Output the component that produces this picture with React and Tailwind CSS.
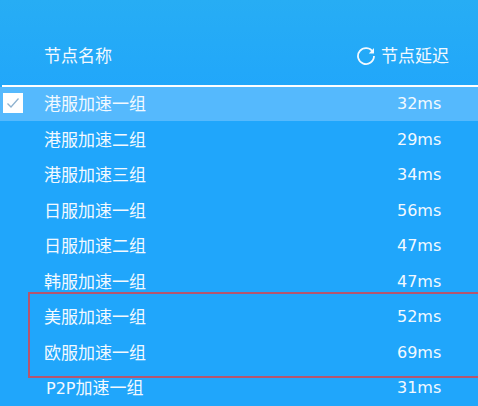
const rows = [
  ["港服加速一组", "32ms"],
  ["港服加速二组", "29ms"],
  ["港服加速三组", "34ms"],
  ["日服加速一组", "56ms"],
  ["日服加速二组", "47ms"],
  ["韩服加速一组", "47ms"],
  ["美服加速一组", "52ms"],
  ["欧服加速一组", "69ms"],
];
const font = "font-['Noto_Sans','Noto_Sans_CJK_SC',sans-serif]";
const latin = "font-['DejaVu_Sans',sans-serif] text-[16px]";

function Row({ name, ms, selected }) {
  return (
    <div className={`relative mb-[1.5px] flex h-[34px] items-center pl-[44px] pr-[36px] text-[17px] ${selected ? "bg-[#55b9fd]" : ""}`}>
      {selected && (
        <span className="absolute left-[3px] top-[6px] flex h-[20px] w-[20px] items-center justify-center bg-white">
          <svg width="14" height="12" viewBox="0 0 14 12" fill="none" stroke="#8fb2cf" strokeWidth="1.3">
            <path d="M1.5 6.5 5 10 12.5 1.5" />
          </svg>
        </span>
      )}
      <span className="flex-1">{name}</span>
      <span className={`w-[45px] ${latin}`}>{ms}</span>
    </div>
  );
}

export default function App() {
  return (
    <div className={`relative w-[478px] h-[406px] overflow-hidden bg-[linear-gradient(#27adf4_0,#20a6fb_100px,#20a6fb_100%)] text-[#f2f9ff] ${font}`}>
      <div className="flex h-[85px] items-end pb-[16px] pl-[44px] pr-[29px] text-[17px] leading-[26px]">
        <span className="flex-1">节点名称</span>
        <svg className="mr-[5px] mb-[3px]" width="20" height="20" viewBox="0 0 20 20" fill="none" stroke="#f2f9ff" strokeWidth="1.8">
          <path d="M17 6.2A8 8 0 1 0 18 10" />
          <path d="M18 2v5.4h-5.2z" fill="#f2f9ff" stroke="none" />
        </svg>
        <span>节点延迟</span>
      </div>
      <div className="ml-[2px] h-[2px] bg-white" />
      <div>
        {rows.map(([name, ms], i) => (
          <Row key={name} name={name} ms={ms} selected={i === 0} />
        ))}
        <Row
          name={
            <span className="pl-[2px]">
              <span className={latin}>P2P</span>加速一组
            </span>
          }
          ms="31ms"
        />
      </div>
      <div className="absolute left-[28px] top-[292px] h-[86px] w-[460px] border-2 border-[#b5566f]" />
    </div>
  );
}
